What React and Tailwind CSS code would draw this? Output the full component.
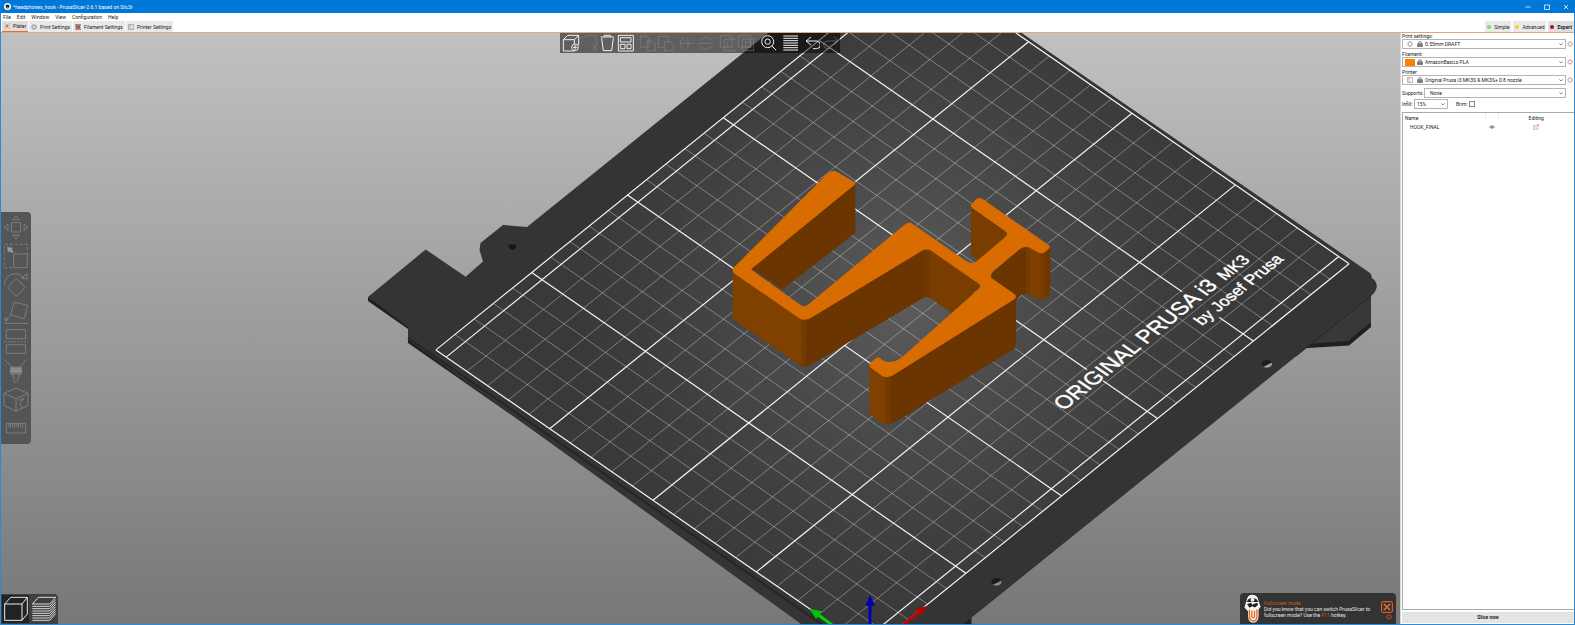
import React from "react";

/* ---------- Print bed geometry (orthographic projection, one unit = 50 mm) ---------- */
const ORIGIN = [446.2, 357.1];
const U = [95.8, -77.4];
const V = [103.4, 71.6];
const at = (u, v) => [ORIGIN[0] + u * U[0] + v * V[0], ORIGIN[1] + u * U[1] + v * V[1]];
const seg = (a, b) => `M${a[0].toFixed(1)} ${a[1].toFixed(1)}L${b[0].toFixed(1)} ${b[1].toFixed(1)}`;

let minorPath = "";
let majorPath = "";
for (let i = 0; i <= 25; i++) {
  const d = seg(at(i / 5, -0.1), at(i / 5, 4.1));
  if (i % 5 === 0) majorPath += d;
  else minorPath += d;
}
for (let i = 0; i <= 20; i++) {
  const d = seg(at(0, i / 5), at(5, i / 5));
  if (i % 5 === 0) majorPath += d;
  else minorPath += d;
}
majorPath += seg(at(0, -0.1), at(5, -0.1)) + seg(at(0, 4.1), at(5, 4.1));
const areaPoints = [at(0, -0.1), at(5, -0.1), at(5, 4.1), at(0, 4.1)].map((p) => p.join(",")).join(" ");

function BedText(props) {
  return (
    <g fontFamily="'Liberation Sans', Arial, sans-serif" {...props}>
      <g transform="translate(1064 411) rotate(-38.9) skewX(16.4)">
        <text fontSize="21">ORIGINAL PRUSA i3</text>
        <text x="207" fontSize="16">MK3</text>
      </g>
      <g transform="translate(1202 326) rotate(-38.9) skewX(16.4)">
        <text fontSize="16">by Josef Prusa</text>
      </g>
    </g>
  );
}

function Scene() {
  return (
    <svg
      className="absolute inset-0 h-full w-full"
      viewBox="1 33 1399 591"
      preserveAspectRatio="xMidYMid slice"
      role="img"
      aria-label="3D print bed with hook model"
    >
      <defs>
        <linearGradient id="sky" x1="0" y1="0" x2="0" y2="1">
          <stop offset="0" stopColor="#c1c1c1" />
          <stop offset="1" stopColor="#777777" />
        </linearGradient>
        <radialGradient id="glow" gradientUnits="userSpaceOnUse" cx="905" cy="300" r="330">
          <stop offset="0" stopColor="#5c5c5c" />
          <stop offset="0.35" stopColor="#4c4c4c" />
          <stop offset="0.75" stopColor="#3e3e3e" />
          <stop offset="1" stopColor="#393939" />
        </radialGradient>
        <linearGradient id="edgeA" x1="0" x2="1" y1="0" y2="0">
          <stop offset="0" stopColor="#7f4000" />
          <stop offset="1" stopColor="#6a3500" />
        </linearGradient>
      </defs>
      <rect x="0" y="32" width="1401" height="593" fill="url(#sky)" />

      {/* lower tab and bed side */}
      <path d="M1300 346L1371 290V327L1349 345.500L1300 348.500Z" fill="#202020" />
      <path d="M1310 340L1371 290V322L1348 341L1308 344Z" fill="#383838" />
      <path d="M368 297L368 301L408 329V343L812 624L830 640H971.500V617L900 600L408 322Z" fill="#202020" />
      {/* heat bed */}
      <path
        d="M1000 18L1370 273Q1372 275 1371.700 278Q1377 281 1376.700 287Q1376 292 1371 296L971 618L940 642H826L408 340V327L368 297L425.700 249.500L465.700 276.700L483 261.500L479.500 250L480.500 243L503 225L527 227L753 45L790 16Z"
        fill="#343434"
      />
      <path d="M1296 356L1371 296" stroke="#222222" strokeWidth="0.800" fill="none" />
      <path d="M408 338L830 630" stroke="#262626" strokeWidth="2" fill="none" />
      <polygon points={areaPoints} fill="url(#glow)" />
      <path d="M508.500 245q3.500 -1.500 7.500 0v3q-3 4 -7 0z" fill="#161616" />
      <g>
        <ellipse cx="1267" cy="364" rx="5.200" ry="4" fill="#1c1c1c" />
        <path d="M1263 367l9 -4.500q.5 3 -2 4.500t-7 0z" fill="#a0a0a0" />
        <ellipse cx="996.500" cy="582" rx="5.200" ry="4" fill="#1c1c1c" />
        <path d="M992.500 585l9 -4.500q.5 3 -2 4.500t-7 0z" fill="#8a8a8a" />
      </g>

      <path d={majorPath} stroke="#f4f4f4" strokeWidth="1.200" fill="none" />
      <path d="M1087 370L1103 381M1182 292L1202 306M1202 306L1219 318" stroke="#404040" strokeWidth="4" />
      <path d={minorPath} stroke="#ffffff" strokeOpacity="0.38" strokeWidth="0.900" fill="none" />
      <BedText fill="#ffffff" stroke="#ffffff" strokeWidth="0.400" />

      {/* hook model */}
      <g transform="translate(700 150) scale(0.33333)">
        <path d="M466 92V248L248 418L153 354Z" fill="#6a3500" />
        <path d="M98 362V508L300 646Q308 651 316 651V495Z" fill="#7f4000" />
        <path d="M316 490V651Q324 650 335 643L668 445Q684 438 697 447L755 489L845 404L690 280Z" fill="#6a3500" />
        <path d="M304 495V648Q308 651 316 651V495Z" fill="#733a00" />
        <path d="M690 290V441L755 489L846 405Z" fill="#7a3d00" />
        <path d="M672 290V443Q682 438 690 441V290Z" fill="#703800" />
        <path d="M508 645V788Q510 793 516 797L545 818Q555 823 564 823V670Z" fill="#7f4000" />
        <path d="M564 670V823Q574 823 585 816L940 598Q948 593 948 586V435Z" fill="#6a3500" />
        <path d="M556 670V822.500Q566 824 572 821V670Z" fill="#733a00" />
        <path d="M813 165V310Q814 317 832 330L818 346L930 254Z" fill="#7a3d00" />
        <path d="M868 380L960 290H990V434Q972 430 960 438Q948 448 948 462V442Z" fill="#6a3500" />
        <path d="M978 286L1016 300V448L990 434L978 431Z" fill="#763b00" />
        <path d="M990 288L1016 300V448L990 434Z" fill="#7f4000" />
        <path d="M1014 300L1051 292V430Q1050 437 1040 444Q1028 453 1014 447Z" fill="url(#edgeA)" />
        <path
          d="M102 352L380 73Q398 58 412 66L462 95Q469 99 464 104L153 358L302 465Q313 473 324 464L610 227Q628 211 642 225L798 333Q817 345 830 334L915 262Q927 252 915 243L818 175Q808 168 816 161L828 148Q837 140 848 147L1046 285Q1053 290 1046 297L1035 306Q1026 313 1013 307L992 295Q976 286 960 297L877 366Q866 378 880 388L943 432Q953 439 943 448L584 673Q565 687 548 679L514 655Q503 646 513 637L526 626Q536 618 546 629Q558 638 574 635Q590 634 604 623L836 417Q846 408 834 400L699 306Q683 293 665 303L336 502Q314 516 296 504L104 371Q93 362 102 352Z"
          fill="#d96c00"
        />
      </g>

      {/* origin axes */}
      <g transform="translate(780 420) scale(0.33333)">
        <path d="M155 614L112 583" stroke="#00d800" strokeWidth="9" />
        <path d="M89 566L126 574L108 597Z" fill="#00c400" />
        <path d="M270 614V552" stroke="#0000b8" strokeWidth="9" />
        <path d="M270 524L284 556Q270 562 257 556Z" fill="#0000a8" />
        <path d="M370 614L418 576" stroke="#c00000" strokeWidth="9" />
        <path d="M441 558L426 585L407 566Z" fill="#b80000" />
      </g>
    </svg>
  );
}

/* ---------- Toolbars ---------- */
const topGroups = [
  [
    { x: 33, label: "Add", on: true, d: "M37 44L50 31H83V60M37 44H70V78H37ZM70 44L83 31", extra: <g><circle cx="72" cy="67" r="10" fill="#555" /><path d="M72 60V74M65 67H79" /></g> },
    { x: 87, label: "Delete", d: "M95 40L106 32H136V60M126 56L138 76M138 56L126 76" },
    { x: 141, label: "Delete all", on: true, d: "M149 36H189M160 36V31H178V36M152 40L157 77H182L187 40" },
    { x: 195, label: "Arrange", on: true, d: "M202 31H247V78H202ZM208 38H240V51H208ZM208 58H222V71H208ZM228 58H240V71H228Z" },
  ],
  [
    { x: 261, label: "Copy", d: "M268 33H286L294 41V66H268ZM288 48H304L313 56V77H288Z" },
    { x: 315, label: "Paste", d: "M322 34H352V50M322 34V68H338M340 50H358L368 60V77H340Z" },
  ],
  [
    { x: 381, label: "Add instance", d: "M393 55H428M411 38V74M398 36A22 22 0 0 0 398 72" },
    { x: 435, label: "Remove instance", d: "M443 55H492M450 45Q466 30 484 45M450 66Q466 80 484 66" },
  ],
  [
    { x: 501, label: "Split to objects", d: "M508 32H544V66H508ZM520 42H556V77H520ZM530 48V70" },
    { x: 555, label: "Split to parts", d: "M562 32H598V66H562ZM574 42H608V77H574ZM584 50H600V68H584Z" },
  ],
  [{ x: 621, label: "Search", on: true, d: "M668 50A18 18 0 1 1 632 50A18 18 0 1 1 668 50M658 50A8 8 0 1 1 642 50A8 8 0 1 1 658 50M663 63L677 77" }],
  [{ x: 687, label: "Variable layer height", on: true, d: "M697 33H742M697 40H742M697 47H742M697 54H742M697 61H742M697 68H742M697 75H742" }],
  [
    { x: 753, label: "Undo", on: true, d: "M780 36L765 48L780 60M765 48H798Q808 50 808 60Q808 71 796 71H786" },
    { x: 807, label: "Redo", d: "M848 36L862 48L848 60M862 48H828Q818 50 818 60Q818 71 830 71H840" },
  ],
];

function TopToolbar() {
  return (
    <div className="absolute left-[40%] top-0 -ml-[1px] flex h-5 gap-1 bg-black/50 px-[2px]">
      {topGroups.map((g, i) => (
        <div key={i} className="flex">
          {g.map((b) => (
            <button key={b.label} aria-label={b.label} className="h-5 w-[18px]">
              <svg
                viewBox={`${b.x} 24 54 60`}
                className="h-5 w-[18px]"
                fill="none"
                stroke={b.on ? "#f0f0f0" : "#909090"}
                strokeOpacity={b.on ? 1 : 0.5}
                strokeWidth="3"
              >
                <path d={b.d} />
                {b.extra}
              </svg>
            </button>
          ))}
        </div>
      ))}
    </div>
  );
}

const gizmos = [
  { label: "Move", d: "M34 55H62V83H34ZM48 34L58 46H38ZM48 104L38 92H58ZM12 69L24 60V78ZM84 69L72 60V78Z" },
  { label: "Scale", d: "M41 149H82V190H41Z", extra: <g><path d="M13 148V120H82V149M13 160V190H41" strokeDasharray="9 6" /><path d="M22 128L38 131L34 135L40 142L36 146L29 140L25 144Z" fill="#a0a0a0" /></g> },
  { label: "Rotate", d: "M49 222L76 249L49 276L23 249ZM13 243Q14 212 45 208Q62 208 72 222M64 222L82 224L80 208Z" },
  { label: "Place on face", d: "M42 293L83 303L73 343L32 332ZM30 333L18 346M18 352L14 342L24 345ZM12 357H84" },
  { label: "Cut", d: "M19 376H77V403H19ZM19 421H77V447H19Z", extra: <path d="M12 412H84" strokeDasharray="6 4" /> },
  { label: "Paint-on supports", d: "M14 466L36 488H60L80 466M32 488V510H64V488M38 510V518H42V532L48 535L54 528V518H58V510", extra: <path d="M32 490H64V506H32Z" fill="#8a8a8a" /> },
  { label: "Seam painting", d: "M48 551L84 567V603L48 621L12 603V567ZM12 567L48 583L84 567M48 583V621M56 588L72 582L60 598L68 612" },
  { label: "Measure", d: "M19 657H77V686H19ZM25 657V667M31 657V671M37 657V667M43 657V671M49 657V667M55 657V671M61 657V667M67 657V671" },
];

function GizmoBar() {
  return (
    <div className="absolute left-0 top-[179px] flex w-[30px] flex-col rounded-r-sm bg-[#555555]">
      {gizmos.map((g, i) => (
        <button key={g.label} aria-label={g.label} className="h-[29px] w-[30px]">
          <svg viewBox={`3 ${23 + 87 * i} 90 87`} className="h-[29px] w-[30px] overflow-visible" fill="none" stroke="#858585" strokeWidth="2.500">
            <path d={g.d} />
            {g.extra}
          </svg>
        </button>
      ))}
    </div>
  );
}

function ViewToggle() {
  return (
    <div className="absolute bottom-0 left-0 flex h-[30px] w-[57px] gap-[1px] rounded-tr-sm bg-[#404040] p-[1px]">
      <button aria-label="3D editor view" className="h-[28px] w-[27px] bg-[#222222]">
        <svg viewBox="5 45 81 84" className="h-[28px] w-[27px]" fill="none" stroke="#e8e8e8" strokeWidth="3">
          <path d="M13 72H65V121H13ZM13 72L31 52H81L65 72M81 52V102L65 121" />
        </svg>
      </button>
      <button aria-label="Preview" className="h-[28px] w-[27px]">
        <svg viewBox="87 45 81 84" className="h-[28px] w-[27px]" fill="none" stroke="#d8d8d8" strokeWidth="3">
          <path d="M94 72H146L164 52H112Z" />
          <path d="M94 79H146L164 59M94 86H146L164 66M94 93H146L164 73M94 100H146L164 80M94 107H146L164 87M94 114H146L164 94M94 121H146L164 101" />
        </svg>
      </button>
    </div>
  );
}

function Notification() {
  return (
    <aside className="absolute bottom-0 right-1 flex h-[31px] w-[156px] rounded-t-sm bg-[#333333] pl-1 text-[5px] leading-[6px] text-[#e6e6e6]">
      <svg viewBox="42 44 50 86" className="mt-[1px] h-[29px] w-[17px] shrink-0">
        <path d="M50 62Q52 46 67 46Q83 47 84 62L91 82L85 90V110Q84 128 69 129Q54 128 54 110V95L43 84Z" fill="#f4f4f4" />
        <path d="M54 60Q66 50 80 60L84 68H50Z" fill="#222" />
        <circle cx="67" cy="61" r="6" fill="#f4f4f4" />
        <path d="M51 74L63 70L66 76L80 70L84 76L74 84L66 80L58 85Z" fill="#222" />
        <path d="M58 90V110Q59 124 69 124Q80 124 80 110V90M65 94V112Q69 117 73 112V94" fill="none" stroke="#ed6b21" strokeWidth="4" />
      </svg>
      <div className="min-w-0 flex-1 whitespace-nowrap pl-[3px] pt-[7px]">
        <p className="text-[#c85a20]">Fullscreen mode</p>
        <p>Did you know that you can switch PrusaSlicer to</p>
        <p>
          fullscreen mode? Use the <span className="text-[#c85a20]">F11</span> hotkey.
        </p>
      </div>
      <div className="flex w-4 shrink-0 flex-col items-center pr-[2px] pt-2">
        <button aria-label="Close notification" className="h-3 w-3">
          <svg viewBox="0 0 36 36" className="h-3 w-3" fill="none" stroke="#ed6b21">
            <rect x="2" y="2" width="32" height="32" rx="3" strokeWidth="3" />
            <path d="M9 9L27 27M27 9L9 27" strokeWidth="5" />
          </svg>
        </button>
        <button aria-label="Hint preferences" className="ml-1 mt-[1px] h-[6px] w-[6px]">
          <Gear className="h-[6px] w-[6px]" color="#c85a20" />
        </button>
      </div>
    </aside>
  );
}

/* ---------- Small icons ---------- */
function Gear({ className, color = "#c98d72" }) {
  return (
    <svg viewBox="0 0 18 18" className={className} fill="none" stroke={color}>
      <circle cx="9" cy="9" r="5.500" strokeWidth="2" />
      <circle cx="9" cy="9" r="7.500" strokeWidth="2" strokeDasharray="3 2.900" />
    </svg>
  );
}

function Lock() {
  return (
    <svg viewBox="0 0 18 18" className="h-[6px] w-[6px] shrink-0" fill="none" stroke="#555" strokeWidth="2">
      <path d="M5 8V5Q5 2 9 2T13 5V8" />
      <path d="M2 8H16V17H2ZM2 13H16" fill="#999" />
    </svg>
  );
}

function PrinterIcon() {
  return (
    <svg viewBox="0 0 18 18" className="h-[6px] w-[6px]" fill="none" stroke="#888" strokeWidth="2">
      <path d="M1 2H17V16H1ZM4 12H10" />
      <path d="M4 6H8" stroke="#ed6b21" strokeWidth="3" />
    </svg>
  );
}

function PlaterIcon() {
  return (
    <svg viewBox="0 0 18 18" className="h-[6px] w-[6px]" fill="none" stroke="#d9622b" strokeWidth="2">
      <path d="M4 1H1V4M14 1H17V4M4 17H1V14M14 17H17V14" stroke="#e09a78" />
      <path d="M9 3V15M3 9H15M5 5L13 13M13 5L5 13" />
    </svg>
  );
}

function SpoolIcon() {
  return (
    <svg viewBox="0 0 18 18" className="h-[6px] w-[6px]">
      <path d="M0 1H18V4H0ZM0 14H18V17H0Z" fill="#777" />
      <path d="M2 4H16V14H2Z" fill="#a8542b" />
      <path d="M6 4V14M11 4V14" stroke="#d9825a" strokeWidth="1" />
    </svg>
  );
}

function Chevron() {
  return (
    <svg viewBox="0 0 12 12" className="pointer-events-none h-1 w-1 shrink-0" fill="none" stroke="#555" strokeWidth="2">
      <path d="M1 4L6 9L11 4" />
    </svg>
  );
}

function Combo({ id, value, children }) {
  return (
    <div className="flex h-[10px] min-w-0 flex-1 items-center gap-[2px] border border-[#b4b4b4] bg-white px-[2px]">
      {children}
      <select id={id} defaultValue={value} className="min-w-0 flex-1 appearance-none bg-transparent leading-[8px] outline-none">
        <option>{value}</option>
      </select>
      <Chevron />
    </div>
  );
}

function Preset({ id, label, value, icon }) {
  return (
    <div className="mb-[2px]">
      <label htmlFor={id} className="block h-[6px] leading-[6px]">
        {label}
      </label>
      <div className="flex items-center gap-[1px]">
        <Combo id={id} value={value}>
          <span className="flex w-[10px] shrink-0 items-center justify-center">{icon}</span>
          <Lock />
        </Combo>
        <button aria-label={`Edit ${label}`} className="h-[6px] w-[6px]">
          <Gear className="h-[6px] w-[6px]" />
        </button>
      </div>
    </div>
  );
}

function Sidebar() {
  return (
    <aside className="flex w-[174px] shrink-0 flex-col border-l border-[#d8d8d8] bg-white pl-[1px] text-[#222]">
      <div className="flex flex-1 flex-col">
        <div className="pr-[1px]">
          <Preset id="print" label="Print settings:" value="0.55mm DRAFT" icon={<Gear className="h-[6px] w-[6px]" color="#9a8a80" />} />
          <Preset id="filament" label="Filament:" value="AmazonBasics PLA" icon={<span className="h-[7px] w-[10px] bg-[#ff8000]" />} />
          <Preset id="printer" label="Printer:" value="Original Prusa i3 MK3S &amp; MK3S+ 0.8 nozzle" icon={<PrinterIcon />} />
        </div>
        <div className="mt-[1px] flex items-center pr-2">
          <label htmlFor="supports" className="w-[22px]">Supports:</label>
          <Combo id="supports" value="None"><span className="w-[1px]" /></Combo>
        </div>
        <div className="mt-[1px] flex items-center">
          <label htmlFor="infill" className="w-3">Infill:</label>
          <div className="flex w-[34px]"><Combo id="infill" value="15%" /></div>
          <label htmlFor="brim" className="ml-2">Brim:</label>
          <input id="brim" type="checkbox" className="ml-[1px] h-[6px] w-[6px] appearance-none border border-[#888] bg-white" />
        </div>
        <div className="mt-[3px] flex-1 border border-r-0 border-[#aaaaaa]">
          <table className="w-full table-fixed border-collapse text-left">
            <thead>
              <tr className="h-[9px]">
                <th className="pl-[2px] font-normal">Name</th>
                <th className="w-[13px] border-x border-[#eeeeee]" aria-label="Visible" />
                <th className="w-[76px] text-center font-normal">Editing</th>
              </tr>
            </thead>
            <tbody>
              <tr className="h-[10px]">
                <td className="pl-[7px]">HOOK_FINAL</td>
                <td>
                  <svg viewBox="0 0 18 12" className="mx-auto h-1 w-[6px]" fill="none" stroke="#666" strokeWidth="2">
                    <path d="M1 6Q9 -3 17 6Q9 15 1 6Z" />
                    <circle cx="9" cy="6" r="2" fill="#666" />
                  </svg>
                </td>
                <td>
                  <svg viewBox="0 0 18 18" className="mx-auto h-[6px] w-[6px]" fill="none" strokeWidth="2">
                    <path d="M9 5H2V16H14V10" stroke="#a8958c" />
                    <path d="M7 11L16 3M10 2H17V9" stroke="#e07b48" />
                  </svg>
                </td>
              </tr>
            </tbody>
          </table>
        </div>
      </div>
      <button className="mb-[1px] mt-[2px] h-[11px] bg-[#e4e4e4] font-bold leading-[11px]">Slice now</button>
    </aside>
  );
}

const tabs = [
  { label: "Plater", icon: <PlaterIcon />, active: true },
  { label: "Print Settings", icon: <Gear className="h-[6px] w-[6px]" color="#777" /> },
  { label: "Filament Settings", icon: <SpoolIcon /> },
  { label: "Printer Settings", icon: <PrinterIcon /> },
];

export default function App() {
  return (
    <div className="flex h-screen flex-col overflow-hidden bg-white font-[Roboto,'Open_Sans',sans-serif] text-[5px] leading-[8px] text-[#222]">
      <header className="flex h-[13px] shrink-0 items-center bg-[#0078d7] px-1 text-white">
        <svg viewBox="0 0 20 20" className="mr-[2px] h-[7px] w-[7px]">
          <circle cx="10" cy="10" r="10" fill="#fff" />
          <path d="M4 8Q10 1 16 8L14 15H7Z" fill="#222" />
          <path d="M8 11H13V16H8Z" fill="#ed6b21" />
        </svg>
        <h1 className="flex-1">*headphones_hook - PrusaSlicer-2.6.1 based on Slic3r</h1>
        <div className="flex gap-[13px] pr-[2px]">
          <button aria-label="Minimize" className="h-[6px] w-[6px]">
            <svg viewBox="0 0 12 12" className="h-[6px] w-[6px]" stroke="#fff" strokeWidth="1.500"><path d="M1 6H11" /></svg>
          </button>
          <button aria-label="Maximize" className="h-[6px] w-[6px]">
            <svg viewBox="0 0 12 12" className="h-[6px] w-[6px]" fill="none" stroke="#fff" strokeWidth="1.500"><path d="M1 2H11V11H1Z" /></svg>
          </button>
          <button aria-label="Close" className="h-[6px] w-[6px]">
            <svg viewBox="0 0 12 12" className="h-[6px] w-[6px]" stroke="#fff" strokeWidth="1.500"><path d="M2 2L10 10M10 2L2 10" /></svg>
          </button>
        </div>
      </header>

      <div className="flex min-h-0 flex-1 flex-col border-x border-b border-[#2d8ad8]">
        <nav className="flex h-[8px] shrink-0 gap-[6px] pl-[2px]" aria-label="Menu">
          {["File", "Edit", "Window", "View", "Configuration", "Help"].map((m) => (
            <button key={m}>{m}</button>
          ))}
        </nav>
        <div className="flex h-3 shrink-0 items-stretch justify-between border-b border-[#e8a27e] pl-[1px]">
          <div className="flex gap-[1px]">
            {tabs.map((t) => (
              <button
                key={t.label}
                className={
                  t.active
                    ? "flex items-center gap-[3px] border-b border-[#ed6b21] bg-[#dedede] px-[2px]"
                    : "flex items-center gap-[3px] bg-[#e9e9e9] px-[2px]"
                }
              >
                {t.icon}
                {t.label}
              </button>
            ))}
          </div>
          <div className="flex gap-[2px]">
            <button className="flex items-center gap-[3px] bg-[#e9e9e9] px-[2px]">
              <span className="h-1 w-1 rounded-full bg-[#7be04a]" />Simple
            </button>
            <button className="flex items-center gap-[3px] bg-[#e9e9e9] px-[2px]">
              <span className="h-1 w-1 rounded-full bg-[#f2cf2e]" />Advanced
            </button>
            <button className="flex items-center gap-[3px] bg-[#dedede] px-[2px] font-bold">
              <span className="h-1 w-1 rounded-full bg-[#c80000]" />Expert
            </button>
          </div>
        </div>

        <div className="flex min-h-0 flex-1">
          <main className="relative min-w-0 flex-1 overflow-hidden">
            <Scene />
            <TopToolbar />
            <GizmoBar />
            <ViewToggle />
            <Notification />
          </main>
          <Sidebar />
        </div>
      </div>
    </div>
  );
}
